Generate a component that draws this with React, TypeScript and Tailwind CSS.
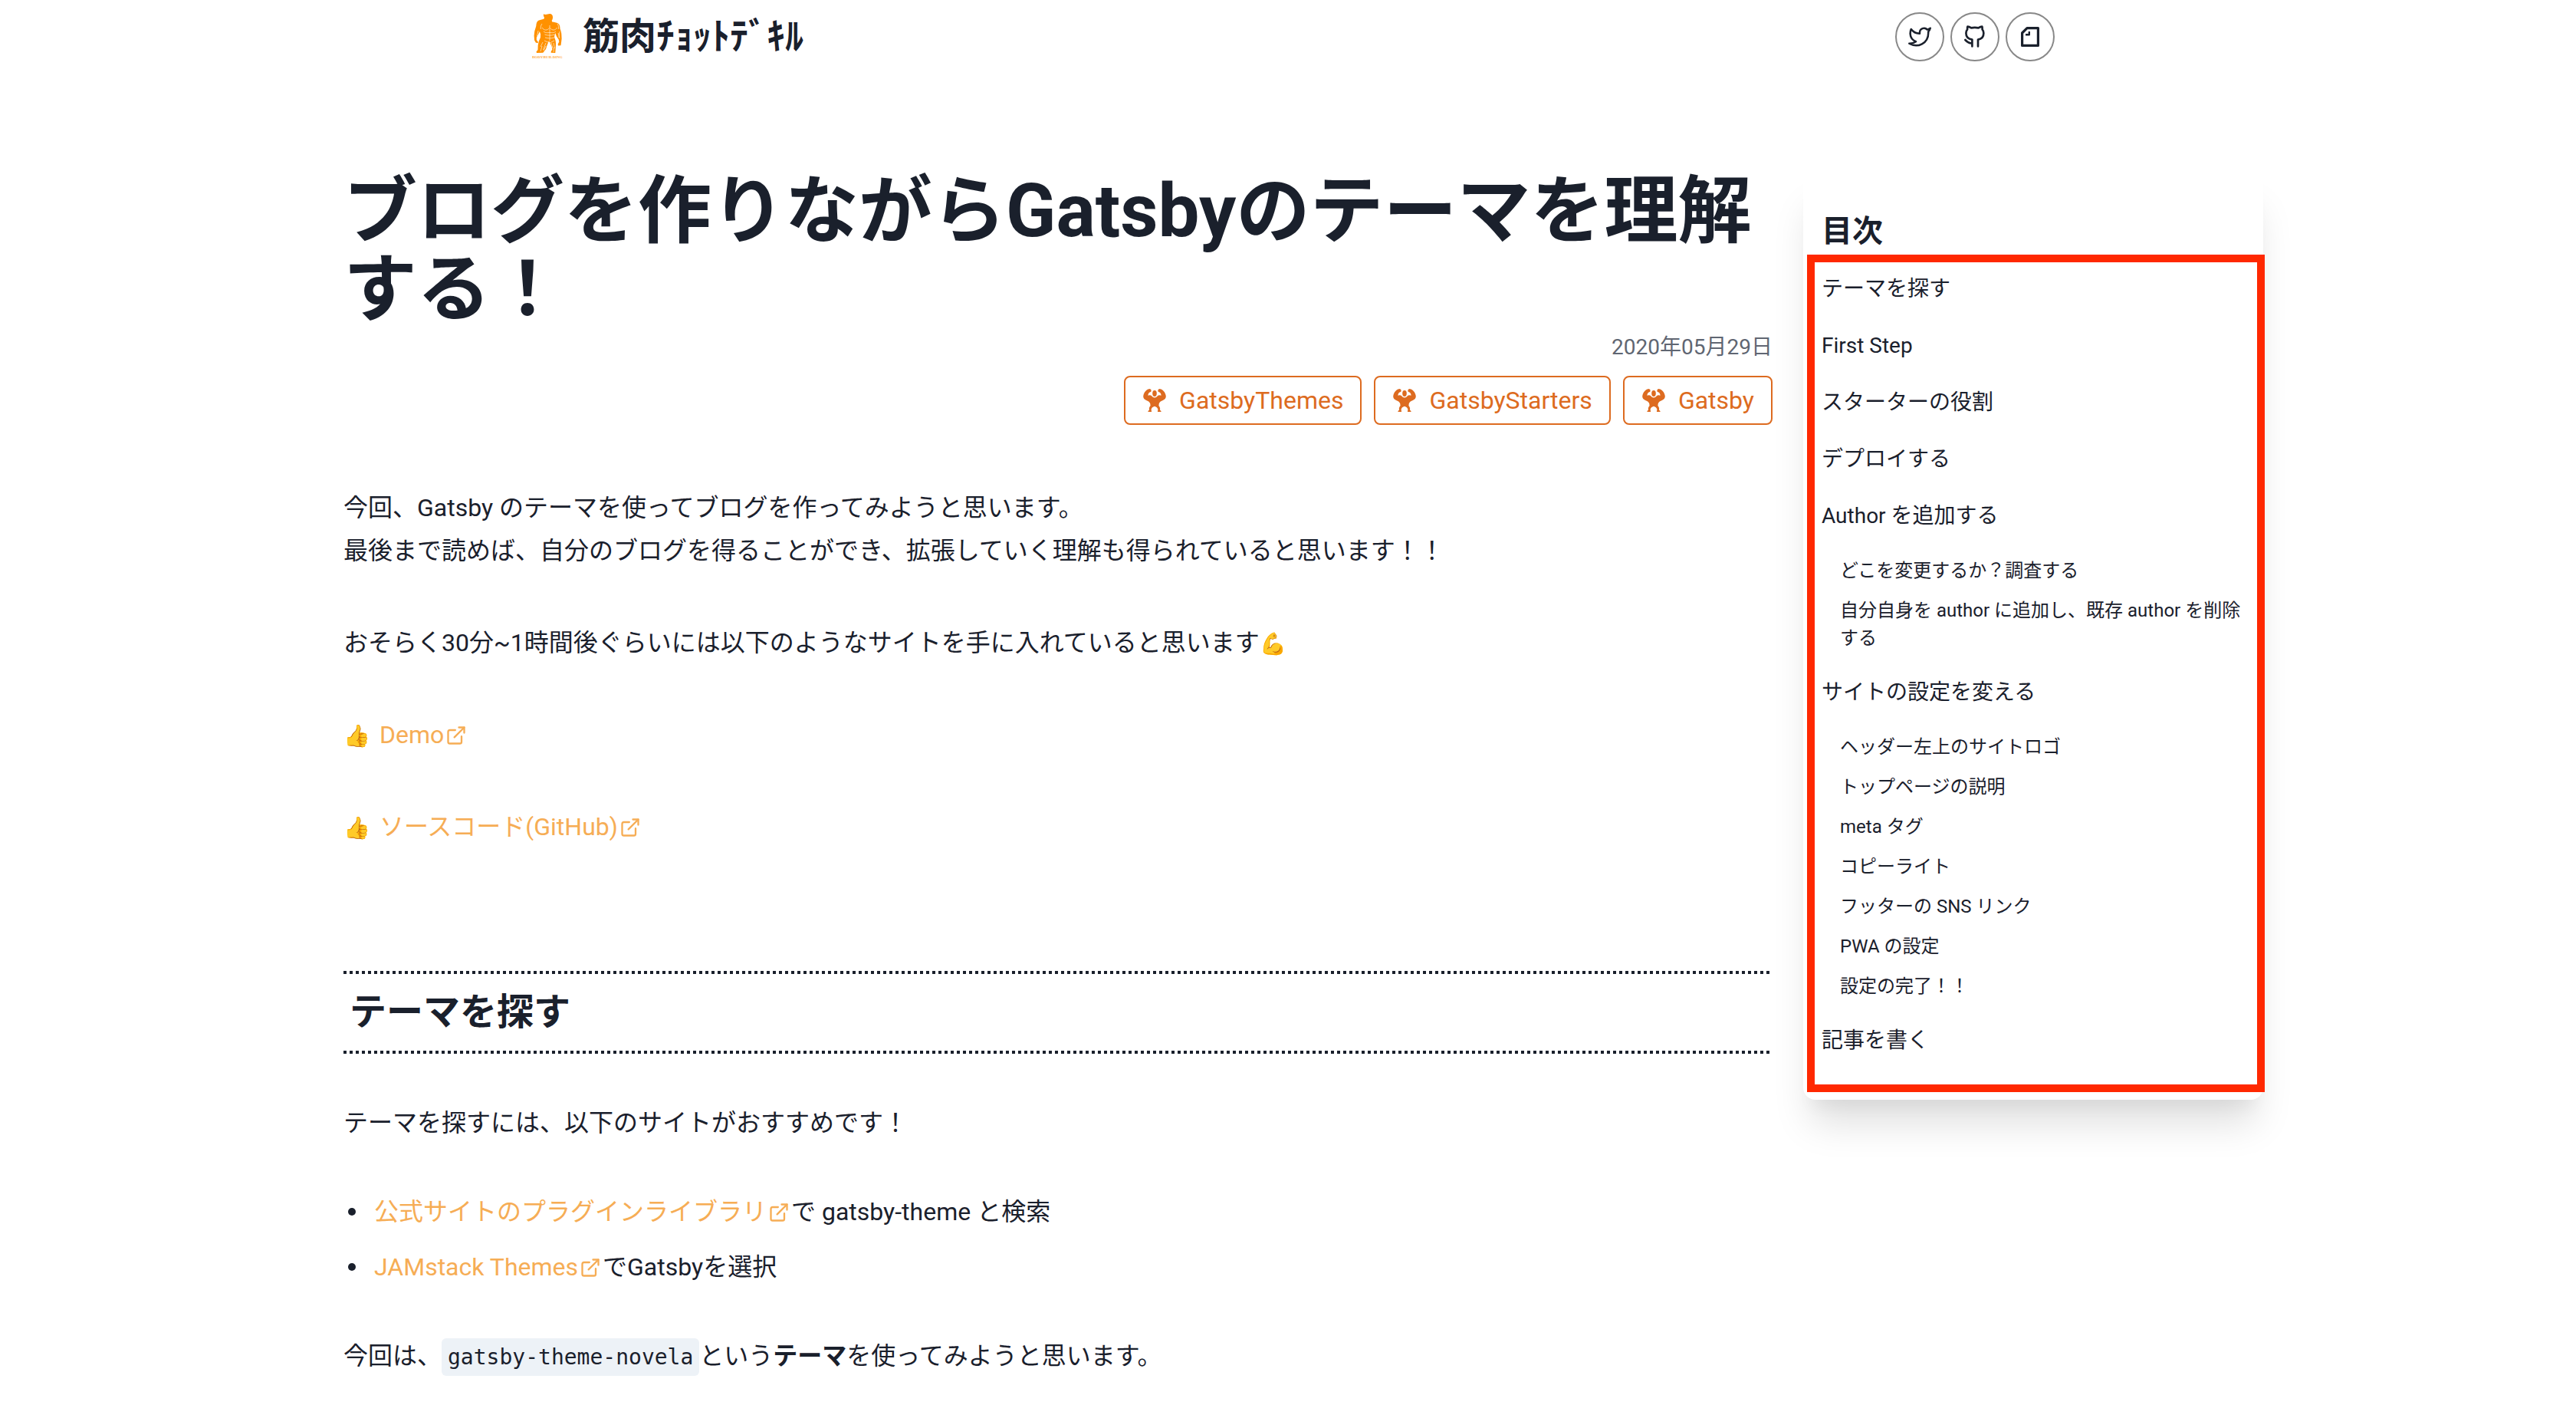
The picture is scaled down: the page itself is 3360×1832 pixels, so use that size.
import type { ReactNode } from "react";
import { FiTwitter, FiExternalLink } from "react-icons/fi";

const tags = ["GatsbyThemes", "GatsbyStarters", "Gatsby"];

type TocEntry = { title: string; children?: string[] };

const toc: TocEntry[] = [
  { title: "テーマを探す" },
  { title: "First Step" },
  { title: "スターターの役割" },
  { title: "デプロイする" },
  {
    title: "Author を追加する",
    children: ["どこを変更するか？調査する", "自分自身を author に追加し、既存 author を削除する"],
  },
  {
    title: "サイトの設定を変える",
    children: [
      "ヘッダー左上のサイトロゴ",
      "トップページの説明",
      "meta タグ",
      "コピーライト",
      "フッターの SNS リンク",
      "PWA の設定",
      "設定の完了！！",
    ],
  },
  { title: "記事を書く" },
];

function BodybuilderLogo() {
  return (
    <svg viewBox="0 0 64 64" className="size-16" aria-hidden="true">
      <path
        fill="#ff9100"
        d="M37 2c2.600 0 4 1.800 4 4.400 0 1.800-.5 3.300-1.300 4.400l.5 1.700c2.500.6 5.500.6 8 2.200 2 1.500 2.300 4 2.300 6.800 1 2.500 2 5.500 1.900 8.500.4 3 .3 6-.3 9l-.6 4.200-3.500.4-.3-2.200 1.600-2.800-.6-3-2.700-4.200-1.800-4.500-1 4c-.3 1.600.4 2.800.9 4.300 1 3 1.200 6.300.8 9.300l-.6 8.500-5.700-.3.300-2.200 1.500-1.500-.8-4.500-2.500-5-1.100-2.300-2.200 5.300-1.800 5.500-3.700 4.800-8.300.2-.5-1.500 2-2.500.2-6 1.200-5.500 2-4.500.2-4.500-1.200-3.500-1.800 4-2.200 3.500-.1 3.500 2.200 3-.6 1.200-2.600-.6-1.700-3-.5-6 .7-6 2-6.500c.2-3.500.7-6 3-7.400 2-.9 4.500-1.300 7-2l.8-1.700c-.9-1.100-1.300-2.600-1.300-4.400C33 3.800 34.400 2 37 2z"
      />
      <g fill="none" stroke="#fff" strokeWidth=".7" opacity=".85">
        <path d="M27 15c-1.500 2-2 4.500-1.700 7M47 15c1.400 2 1.800 4.300 1.300 7M27 20c2.500 4 7 4 9.500.500M37.500 20.500c2.500 3.500 7 3.500 9-.5M37 17v20M29 25c3 2.500 5.500 1.500 8 1.500s5 1 8-1.500M30.500 29c4 1.500 9 1.500 13 0M31 33c4 1.200 8 1.200 12 0M30 37l7 3 6-3" />
        <path d="M28 39l-3 6M32 40l-3.500 9M27 44l-2 7M42 40l1.500 7M39 40l2 7M42.500 46l-.5 6M22 24l-1.500 7M23.500 28l-3 6M50 25l-1 8M48 27l2 7M32 44l-3 6" />
      </g>
      <text x="14" y="60" fontSize="5" fontWeight="700" fill="#ff9100" opacity=".75" className="font-['Liberation_Serif',serif]">
        BODYBUILDING
      </text>
    </svg>
  );
}

function MuscleIcon() {
  return (
    <svg viewBox="0 0 30 30" className="h-[30px] w-8" fill="currentColor" aria-hidden="true">
      <ellipse cx="15" cy="6" rx="2.800" ry="4" />
      <path d="M6.500.6 9 0l1.600 1.600-.2 2.200-2.200.9C6.900 5.800 6.400 7.200 6.500 8.800c1.800-.9 3.600-.6 4.900.8.9 1.300 2.200 2 3.600 2s2.700-.7 3.600-2c1.300-1.400 3.100-1.700 4.900-.8.1-1.600-.4-3-1.700-4.100l-2.200-.9-.2-2.200L21 0l2.500.6c3.500 1.800 5.900 5 6.300 9 .1 2.700-1.500 4.400-4 5.300-2.200.9-4.200 2-5 4l-.4 3c1.600 1.700 2.100 3.600 1.500 5.600l1.600 1.500v1h-4.600l.5-3.200c-.5-1.900-1.800-3.200-4.400-4-2.600.8-3.900 2.100-4.400 4l.5 3.200H6.500v-1l1.600-1.500c-.6-2-.1-3.900 1.500-5.600l-.4-3c-.8-2-2.800-3.100-5-4-2.500-.9-4.100-2.600-4-5.300C.6 5.600 3 2.400 6.500.6z" />
    </svg>
  );
}

function OctocatIcon() {
  return (
    <svg viewBox="0 0 24 24" className="size-8" fill="none" stroke="currentColor" strokeWidth="2" strokeLinecap="round" strokeLinejoin="round" aria-hidden="true">
      <path d="M9.300 21.300v-6.600c-3-.4-6-2-6-6.200 0-1.500.4-2.700 1.300-3.700-.2-1.200-.1-2 .2-2.800 1.300 0 2.500.6 3.600 1.300 2.300-.6 4.600-.6 7 0 1.100-.7 2.300-1.300 3.600-1.300.3.8.4 1.600.2 2.800.9 1 1.300 2.200 1.300 3.700 0 4.200-2.500 5.800-5.500 6.200v6.600M9.300 18.200c-3 .3-4.500-.7-6.800-3.200" />
    </svg>
  );
}

function NoteIcon() {
  return (
    <svg viewBox="0 0 24 26" className="h-[26px] w-6" fill="none" stroke="currentColor" strokeLinejoin="round" aria-hidden="true">
      <path d="M8 1.600h14.400v22.800H1.600V8z" strokeWidth="3.200" />
      <path d="M10.800 6v4.300H6" strokeWidth="2.400" />
    </svg>
  );
}

function SocialLink({ label, children }: { label: string; children: ReactNode }) {
  return (
    <a href="#" aria-label={label} className="flex size-16 items-center justify-center rounded-full border-2 border-[#888888]">
      {children}
    </a>
  );
}

function ExternalLink({ children }: { children: ReactNode }) {
  return (
    <a href="#" className="text-[#f6ad55]">
      {children}
      <FiExternalLink className="mx-0.5 inline size-7 align-[-4px]" />
    </a>
  );
}

function Emoji({ children }: { children: string }) {
  return <span className="mr-1 text-[28px] leading-none">{children}</span>;
}

function Bullet({ children }: { children: ReactNode }) {
  return (
    <li className="flex items-center gap-6 pl-1.5 before:size-2.5 before:shrink-0 before:rounded-full before:bg-current">
      <span>{children}</span>
    </li>
  );
}

function DottedRule() {
  return <div className="h-1 bg-[repeating-linear-gradient(90deg,#1a202c_0_4px,transparent_4px_8px)]" />;
}

export default function App() {
  return (
    <div className="h-screen overflow-hidden bg-white font-['Roboto','Noto_Sans_CJK_JP',sans-serif] text-[32px] leading-[56px] text-[#1a202c]">
      <header className="mx-auto flex h-24 max-w-[2000px] items-center justify-between">
        <a href="#" className="flex items-center gap-4">
          <BodybuilderLogo />
          <span className="text-[48px] leading-none font-bold">筋肉ﾁｮｯﾄﾃﾞｷﾙ</span>
        </a>
        <nav className="flex gap-2">
          <SocialLink label="Twitter">
            <FiTwitter className="size-[30px]" />
          </SocialLink>
          <SocialLink label="GitHub">
            <OctocatIcon />
          </SocialLink>
          <SocialLink label="note">
            <NoteIcon />
          </SocialLink>
        </nav>
      </header>

      <div className="mx-auto flex max-w-[2544px] items-start pt-32">
        <main className="min-w-0 flex-1 px-10">
          <h1 className="text-[96px] leading-[102px] font-bold">ブログを作りながらGatsbyのテーマを理解する！</h1>
          <p className="mt-1 text-right text-[28px] leading-[42px] text-[#606672]">2020年05月29日</p>
          <ul className="mt-4 flex justify-end gap-4">
            {tags.map((tag) => (
              <li key={tag}>
                <a href="#" className="flex h-16 items-center gap-4 rounded-lg border-2 border-[#dd6b20] px-[22px] text-[#dd6b20]">
                  <MuscleIcon />
                  {tag}
                </a>
              </li>
            ))}
          </ul>

          <div className="mt-20 flex flex-col gap-16">
            <p>
              今回、Gatsby のテーマを使ってブログを作ってみようと思います。
              <br />
              最後まで読めば、自分のブログを得ることができ、拡張していく理解も得られていると思います！！
            </p>
            <p>
              おそらく30分~1時間後ぐらいには以下のようなサイトを手に入れていると思います<Emoji>💪</Emoji>
            </p>
            <p>
              <Emoji>👍</Emoji> <ExternalLink>Demo</ExternalLink>
            </p>
            <p>
              <Emoji>👍</Emoji> <ExternalLink>ソースコード(GitHub)</ExternalLink>
            </p>
          </div>

          <div className="mt-40">
            <DottedRule />
            <h2 className="px-2 py-3.5 text-[48px] leading-[72px] font-bold">テーマを探す</h2>
            <DottedRule />
          </div>
          <p className="mt-[62px]">テーマを探すには、以下のサイトがおすすめです！</p>
          <ul className="mt-[60px] flex flex-col gap-4">
            <Bullet>
              <ExternalLink>公式サイトのプラグインライブラリ</ExternalLink>で gatsby-theme と検索
            </Bullet>
            <Bullet>
              <ExternalLink>JAMstack Themes</ExternalLink>でGatsbyを選択
            </Bullet>
          </ul>
          <p className="mt-[60px]">
            今回は、
            <code className="rounded-md bg-[#edf2f7] px-2 py-2 font-['DejaVu_Sans_Mono',monospace] text-[28px]">gatsby-theme-novela</code>
            という<strong className="font-bold">テーマ</strong>を使ってみようと思います。
          </p>
        </main>

        <aside className="relative w-[600px] shrink-0 rounded-2xl bg-white px-6 pt-12 pb-14 shadow-[0_40px_50px_-10px_rgba(0,0,0,0.13),0_20px_20px_-10px_rgba(0,0,0,0.04)]">
          <h2 className="text-[40px] leading-[60px] font-bold">目次</h2>
          <ul className="mt-6 flex flex-col gap-8 text-[28px] leading-[42px]">
            {toc.map((entry) => (
              <li key={entry.title}>
                <a href="#">{entry.title}</a>
                {entry.children && (
                  <ul className="mt-8 flex flex-col gap-4 pl-6 text-[24px] leading-9">
                    {entry.children.map((child) => (
                      <li key={child}>
                        <a href="#">{child}</a>
                      </li>
                    ))}
                  </ul>
                )}
              </li>
            ))}
          </ul>
          <div className="pointer-events-none absolute top-[108px] -right-0.5 bottom-2.5 left-[5px] border-[10px] border-[#ff2800]" />
        </aside>
      </div>
    </div>
  );
}
